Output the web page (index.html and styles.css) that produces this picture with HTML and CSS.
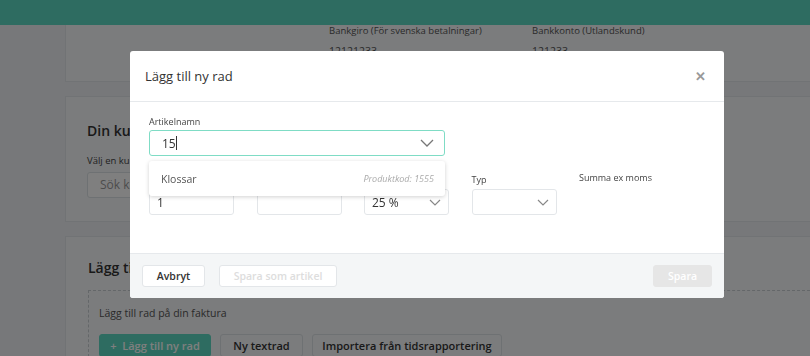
FILE: index.html
```html
<!DOCTYPE html>
<html lang="sv">
<head>
    <meta charset="UTF-8">
    <title>Faktura</title>
    <link rel="stylesheet" href="styles.css">
</head>
<body>
    <header class="topbar"></header>

    <main class="page">
        <!-- Betalningsinfo -->
        <section class="card card-bank">
            <div class="bank-col">
                <div class="bank-label">Bankgiro (För svenska betalningar)</div>
                <div class="bank-value">12121233</div>
            </div>
            <div class="bank-col">
                <div class="bank-label">Bankkonto (Utlandskund)</div>
                <div class="bank-value">121233</div>
            </div>
        </section>

        <!-- Kund -->
        <section class="card card-customer">
            <h2>Din kund</h2>
            <div class="small-label">Välj en kund</div>
            <div class="search">Sök kund</div>
        </section>

        <!-- Rader -->
        <section class="card card-rows">
            <h2>Lägg till rader</h2>
            <div class="dashed-box">
                <p>Lägg till rad på din faktura</p>
                <div class="row-buttons">
                    <button class="btn-green">+&nbsp; Lägg till ny rad</button>
                    <button class="btn-outline btn-text">Ny textrad</button>
                    <button class="btn-outline btn-import">Importera från tidsrapportering</button>
                </div>
            </div>
        </section>
    </main>

    <div class="overlay"></div>

    <!-- Modal: ny rad -->
    <div class="modal">
        <div class="modal-header">
            <h3>Lägg till ny rad</h3>
            <span class="close">&#x2715;</span>
        </div>
        <div class="modal-body">
            <label class="field-label">Artikelnamn</label>
            <div class="input input-active">
                <span>15<span class="caret"></span></span>
                <svg class="chevron" width="14" height="8" viewBox="0 0 14 8"><path d="M1 1l6 6 6-6" fill="none" stroke="#777" stroke-width="1.3"/></svg>
            </div>

            <div class="field-row">
                <div class="field">
                    <label class="field-label">Antal</label>
                    <div class="input small">1</div>
                </div>
                <div class="field">
                    <label class="field-label">Pris</label>
                    <div class="input small"></div>
                </div>
                <div class="field">
                    <label class="field-label">Moms</label>
                    <div class="input small">
                        <span>25 %</span>
                        <svg class="chevron" width="12" height="7" viewBox="0 0 12 7"><path d="M1 1l5 5 5-5" fill="none" stroke="#888" stroke-width="1.2"/></svg>
                    </div>
                </div>
                <div class="field">
                    <label class="field-label">Typ</label>
                    <div class="input small">
                        <span></span>
                        <svg class="chevron" width="12" height="7" viewBox="0 0 12 7"><path d="M1 1l5 5 5-5" fill="none" stroke="#888" stroke-width="1.2"/></svg>
                    </div>
                </div>
                <div class="field">
                    <label class="field-label sum-label">Summa ex moms</label>
                </div>
            </div>

            <!-- förslag -->
            <div class="suggest">
                <span class="suggest-name">Klossar</span>
                <span class="suggest-code">Produktkod: 1555</span>
            </div>
        </div>
        <div class="modal-footer">
            <button class="btn-white btn-cancel">Avbryt</button>
            <button class="btn-white disabled">Spara som artikel</button>
            <button class="btn-save">Spara</button>
        </div>
    </div>
</body>
</html>
```

FILE: styles.css
```css
body {
    font-family: "Open Sans", "Noto Sans", sans-serif;
    margin: 0;
    background-color: #eef1f5;
    color: #333;
    overflow: hidden;
    height: 356px;
}
.topbar {
    height: 25px;
    background-color: #5dd8c2;
}
.page {
    padding-left: 65px;
}
.card {
    background-color: #f6f8fa;
    border: 1px solid #e2e6ea;
    border-right: none;
    margin-bottom: 14px;
}
.card-bank {
    height: 56px;
    display: flex;
    padding-left: 263px;
    border-top: none;
}
.bank-col {
    width: 203px;
}
.bank-label {
    font-size: 9.5px;
    color: #555;
    line-height: 12px;
}
.bank-value {
    font-size: 10.5px;
    color: #555;
    margin-top: 7px;
}
.card-customer {
    height: 124px;
    padding-left: 21px;
}
.card-customer h2,
.card-rows h2 {
    font-size: 14px;
    font-weight: 600;
    margin: 24px 0 0;
    color: #333;
}
.small-label {
    font-size: 9.5px;
    margin-top: 14px;
    color: #444;
}
.search {
    width: 140px;
    height: 24px;
    margin-top: 5px;
    border: 1px solid #dde2e6;
    background: #fff;
    border-radius: 3px;
    font-size: 12px;
    color: #999;
    line-height: 24px;
    padding-left: 12px;
}
.card-rows {
    height: 140px;
    padding-left: 22px;
}
.card-rows h2 {
    margin-top: 21px;
}
.dashed-box {
    margin-top: 13px;
    border-top: 1px dashed #c9ced3;
    border-left: 1px dashed #c9ced3;
    padding: 15px 0 0 10px;
}
.dashed-box p {
    margin: 0;
    font-size: 10.5px;
    line-height: 14px;
    color: #555;
}
.row-buttons {
    display: flex;
    gap: 9px;
    margin-top: 14px;
}
.row-buttons button {
    height: 23px;
    font-family: inherit;
    font-size: 11px;
    font-weight: 600;
    border-radius: 3px;
    padding: 0;
}
.btn-green {
    background-color: #5dd8c2;
    color: #fff;
    border: 1px solid #5dd8c2;
    width: 112px;
}
.btn-outline {
    background-color: #f6f8fa;
    color: #333;
    border: 1px solid #dde2e6;
}
.btn-text {
    width: 83px;
}
.btn-import {
    width: 190px;
}

/* modal */
.overlay {
    position: fixed;
    inset: 0;
    background-color: rgba(0, 0, 0, 0.5);
}
.modal {
    position: absolute;
    left: 130px;
    top: 51px;
    width: 594px;
    height: 247px;
    background-color: white;
    border-radius: 3px;
    display: flex;
    flex-direction: column;
}
.modal-header {
    height: 50px;
    border-bottom: 1px solid #e6e9ec;
    display: flex;
    align-items: center;
    justify-content: space-between;
    padding: 0 18px 0 15px;
}
.modal-header h3 {
    margin: 0;
    font-size: 13px;
    font-weight: 400;
    color: #333;
}
.close {
    font-size: 13px;
    color: #999;
    font-weight: bold;
}
.modal-body {
    position: relative;
    flex: 1;
    padding: 13px 19px 0;
}
.field-label {
    display: block;
    font-size: 9px;
    color: #444;
    height: 14px;
}
.input {
    box-sizing: border-box;
    height: 26px;
    border: 1px solid #e3e6e9;
    border-radius: 3px;
    display: flex;
    align-items: center;
    justify-content: space-between;
    padding: 0 10px 0 8px;
    font-size: 12px;
    color: #333;
}
.input-active {
    width: 296px;
    margin-top: 1px;
    border-color: #7fdcc5;
    padding: 0 10px 0 12px;
    font-size: 12px;
}
.caret {
    display: inline-block;
    width: 1px;
    height: 14px;
    background: #333;
    vertical-align: -2px;
}
.field-row {
    display: grid;
    grid-template-columns: repeat(5, 85px);
    column-gap: 22.5px;
    margin-top: 17px;
}
.field .field-label {
    height: 12px;
    margin-bottom: 4px;
}
.sum-label {
    margin-top: -2px;
}
.small {
    padding: 0 7px;
}
.suggest {
    position: absolute;
    left: 19px;
    top: 59px;
    width: 296px;
    height: 35px;
    box-sizing: border-box;
    background-color: white;
    border-radius: 3px;
    box-shadow: 0 1px 4px rgba(0, 0, 0, 0.18);
    display: flex;
    align-items: center;
    justify-content: space-between;
    padding: 0 11px 0 12px;
}
.suggest-name {
    font-size: 10.5px;
    color: #555;
}
.suggest-code {
    font-size: 9px;
    font-style: italic;
    color: #aaa;
}
.modal-footer {
    height: 45px;
    box-sizing: border-box;
    background-color: #f4f6f7;
    border-top: 1px solid #e6e9ec;
    display: flex;
    align-items: center;
    gap: 14px;
    padding: 0 12px;
    border-radius: 0 0 3px 3px;
}
.modal-footer button {
    height: 22px;
    font-family: inherit;
    font-size: 10.5px;
    font-weight: 600;
    border-radius: 3px;
    padding: 0;
}
.btn-white {
    background-color: white;
    border: 1px solid #e3e6e9;
    color: #333;
}
.btn-cancel {
    width: 63px;
}
.btn-white.disabled {
    color: #ddd;
    width: 118px;
}
.btn-save {
    margin-left: auto;
    background-color: #e6e6e6;
    border: 1px solid #e6e6e6;
    color: white;
    width: 59px;
}
```
